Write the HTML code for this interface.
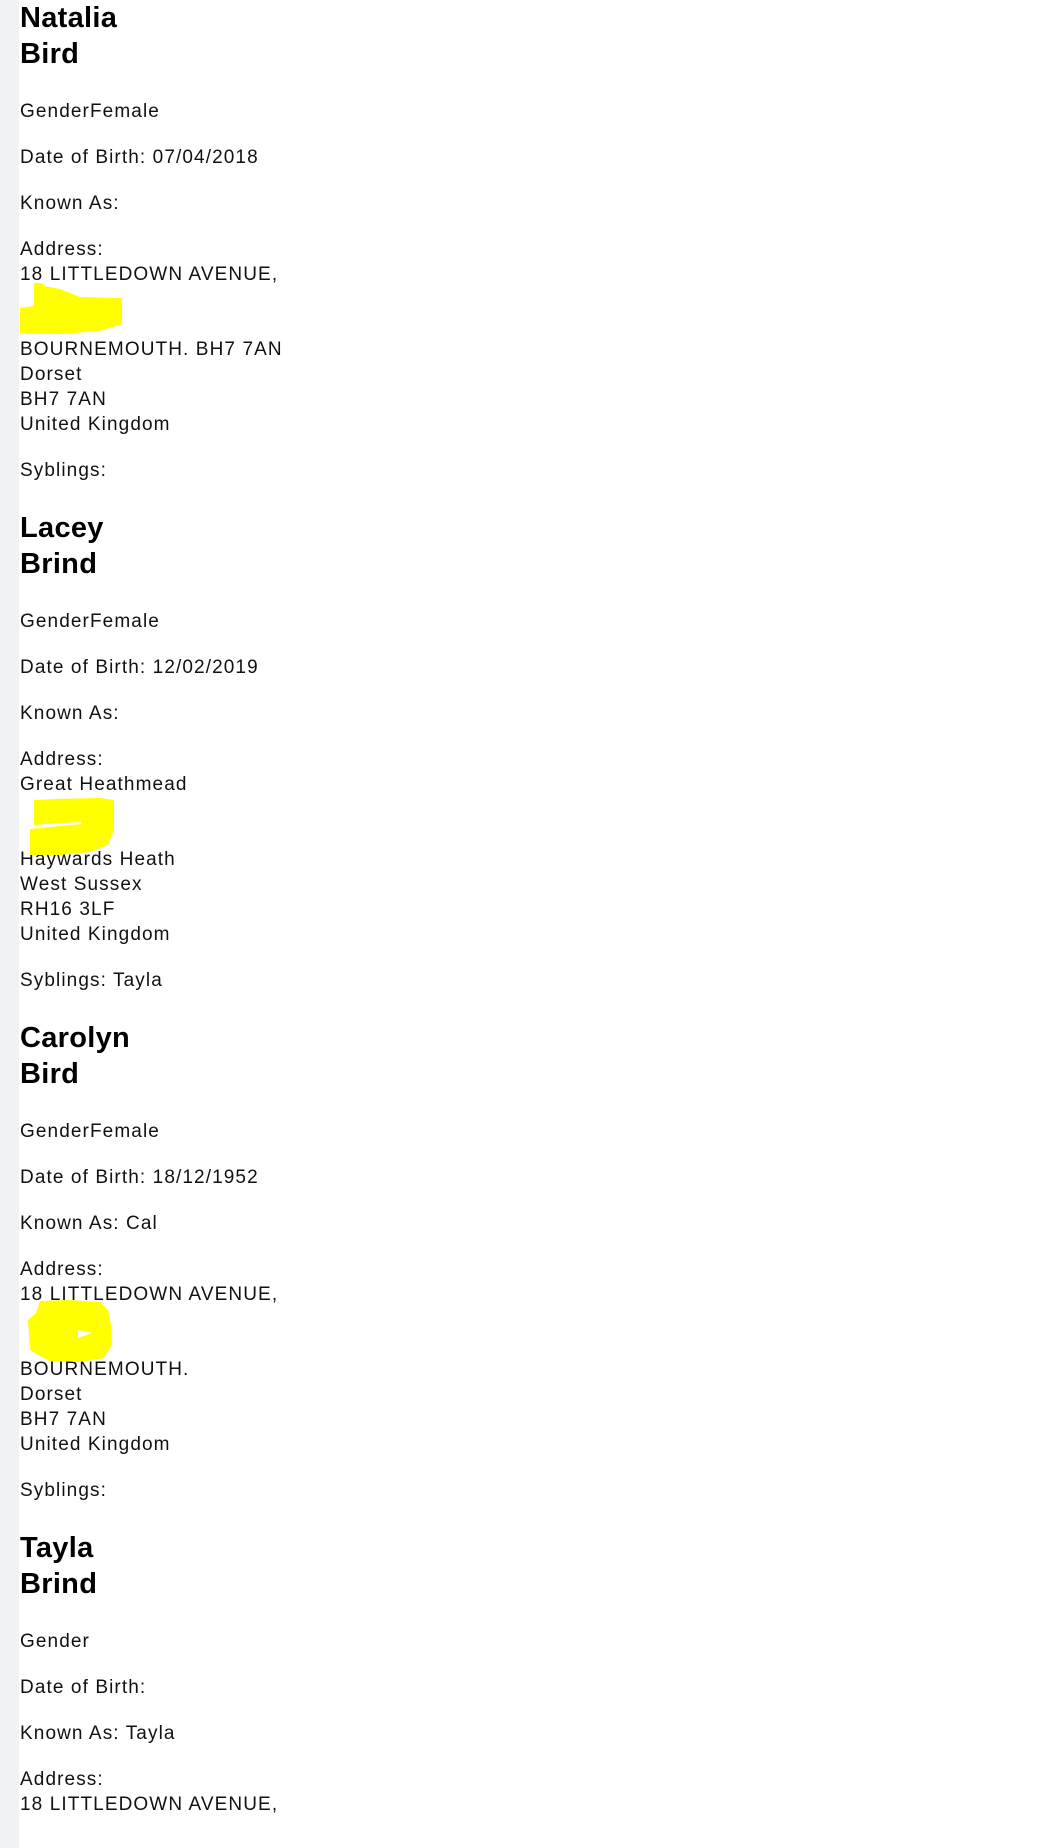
<!DOCTYPE html>
<html><head><meta charset="utf-8"><style>
html,body{margin:0;padding:0;background:#fff;}
body{width:1040px;height:1848px;overflow:hidden;position:relative;font-family:"Liberation Sans",sans-serif;color:#111;}
.strip{position:absolute;left:0;top:0;width:19px;height:1848px;background:#f1f2f4;}
.c{position:absolute;left:20px;top:0;width:1000px;}
h2{font-size:29px;line-height:36px;margin:27px 0;font-weight:bold;color:#000;letter-spacing:0.3px;}
h2.first{margin-top:0;}
p{font-size:19px;line-height:25px;margin:21px 0;letter-spacing:1.1px;}
.y{position:absolute;}
</style></head><body>
<div class="strip"></div>
<div class="c">
<h2 class="first">Natalia<br>Bird</h2>
<p>GenderFemale</p>
<p>Date of Birth: 07/04/2018</p>
<p>Known As: </p>
<p>Address:<br>18 LITTLEDOWN AVENUE,<br><br><br>BOURNEMOUTH. BH7 7AN<br>Dorset<br>BH7 7AN<br>United Kingdom</p>
<p>Syblings: </p>
<h2>Lacey<br>Brind</h2>
<p>GenderFemale</p>
<p>Date of Birth: 12/02/2019</p>
<p>Known As: </p>
<p>Address:<br>Great Heathmead<br><br><br>Haywards Heath<br>West Sussex<br>RH16 3LF<br>United Kingdom</p>
<p>Syblings: Tayla</p>
<h2>Carolyn<br>Bird</h2>
<p>GenderFemale</p>
<p>Date of Birth: 18/12/1952</p>
<p>Known As: Cal</p>
<p>Address:<br>18 LITTLEDOWN AVENUE,<br><br><br>BOURNEMOUTH.<br>Dorset<br>BH7 7AN<br>United Kingdom</p>
<p>Syblings: </p>
<h2>Tayla<br>Brind</h2>
<p>Gender</p>
<p>Date of Birth: </p>
<p>Known As: Tayla</p>
<p>Address:<br>18 LITTLEDOWN AVENUE,</p>
</div>
<svg class="y" style="left:0;top:0" width="200" height="1848">
<path d="M34 283 L42 283 L44 286 L60 289 L80 297 L122 298 L122 324 L100 331 L60 334 L20 333 L20 308 L34 306 Z" fill="#ffff00"/>
<path d="M34 800 L55 799 L100 798 L114 800 L114 830 L108 845 L90 852 L60 855 L30 855 L30 829 L60 826 L82 824 L82 822 L60 823 L34 825 Z" fill="#ffff00"/>
<path d="M40 1301 L70 1300 L100 1302 L108 1310 L111 1325 L112 1345 L104 1358 L80 1362 L50 1361 L38 1355 L30 1350 L28 1320 L36 1313 Z" fill="#ffff00"/>
<path d="M78 1330 L92 1333 L78 1338 Z" fill="#fff"/>
</svg>
</body></html>
